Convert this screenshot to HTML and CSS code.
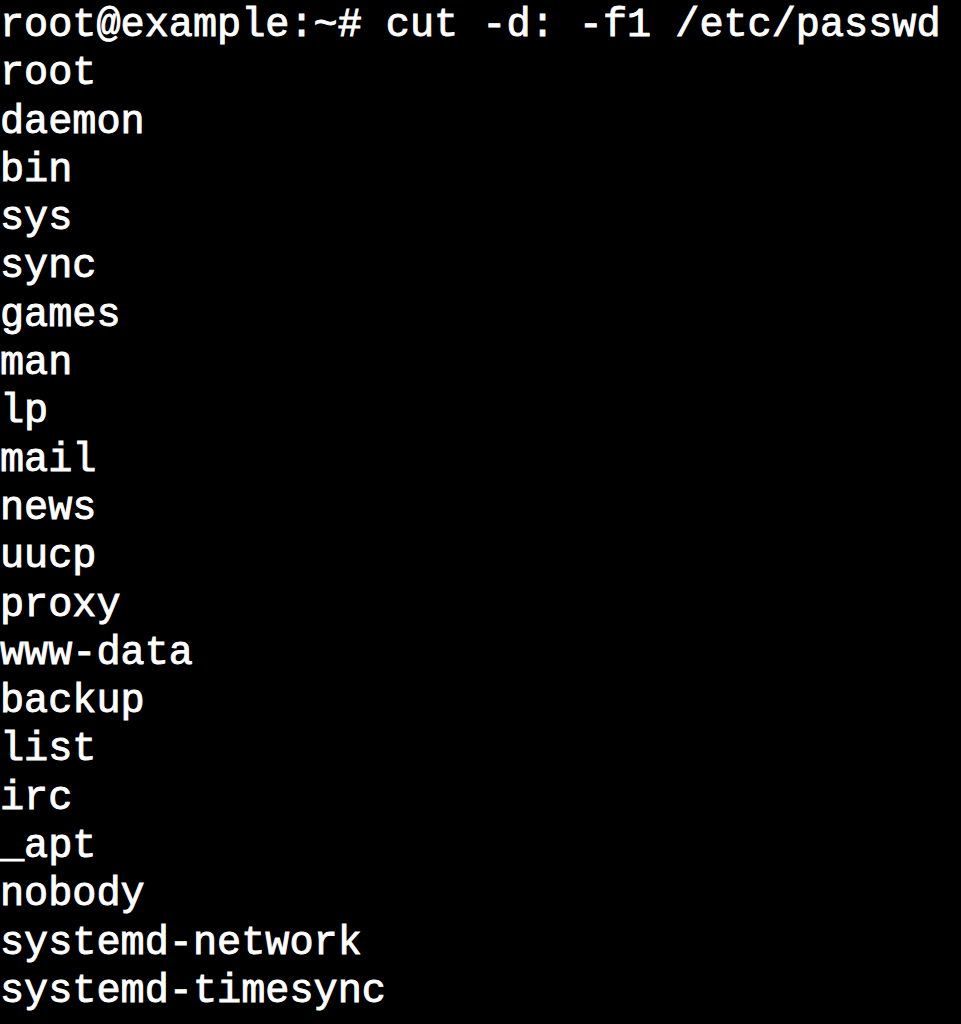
FILE: index.html
```html
<!DOCTYPE html>
<html>
<head>
<meta charset="utf-8">
<link rel="stylesheet" href="styles.css">
</head>
<body>
<pre class="term">root@example:~# cut -d: -f1 /etc/passwd
root
daemon
bin
sys
sync
games
man
lp
mail
news
uucp
proxy
www-data
backup
list
irc
_apt
nobody
systemd-network
systemd-timesync</pre>
</body>
</html>
```
FILE: styles.css
```css
html, body {
  margin: 0;
  padding: 0;
  background: #000;
  height: 100%;
}
.term {
  margin: 0;
  padding: 2px 0 0 0;
  color: #fff;
  font-family: "Courier New", "Nimbus Mono PS", "FreeMono", "Liberation Mono", monospace;
  font-weight: normal;
  -webkit-text-stroke: 0.9px #fff;
  font-size: 40.2px;
  line-height: 48.3px;
}
```
